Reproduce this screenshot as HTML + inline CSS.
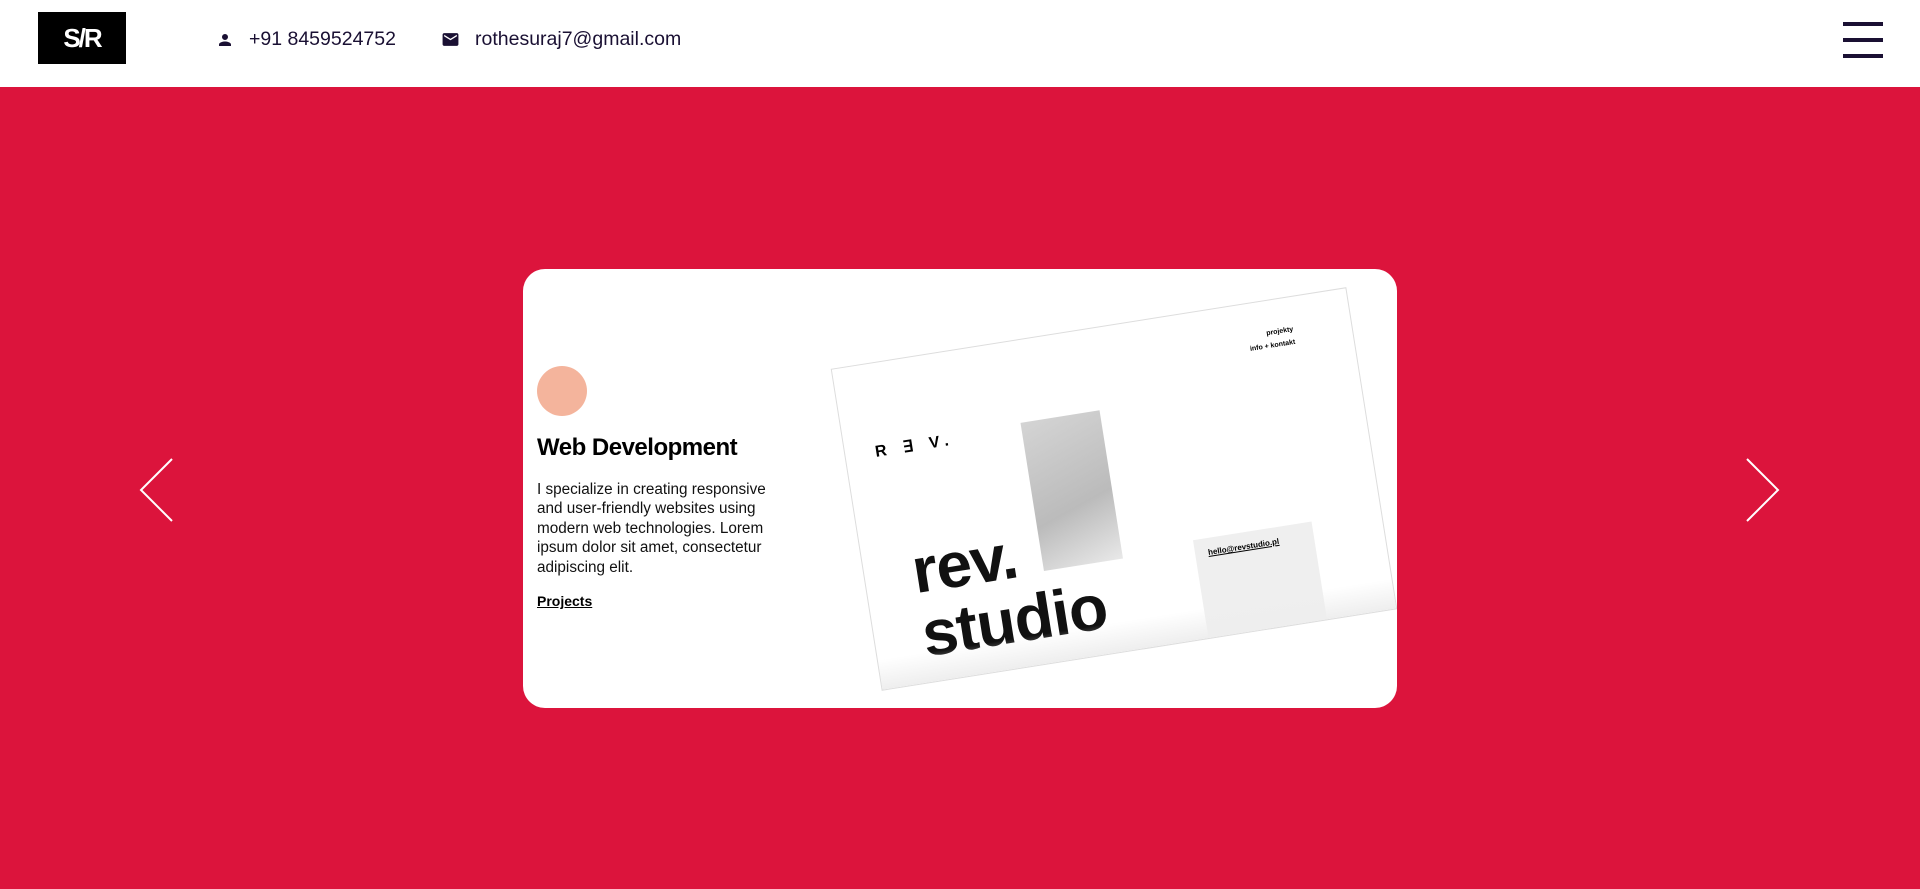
<!DOCTYPE html>
<html><head><meta charset="utf-8"><style>
*{margin:0;padding:0;box-sizing:border-box}
body{width:1920px;height:889px;overflow:hidden;background:#DC143C;font-family:"Liberation Sans",Arial,sans-serif;position:relative}
.hdr{position:absolute;left:0;top:0;width:1920px;height:87px;background:#fff}
.logo{position:absolute;left:38px;top:12px;width:88px;height:52px;background:#000;color:#fff;font-weight:bold;font-size:26px;text-align:center;line-height:52px;letter-spacing:-2px}
.ct{position:absolute;top:27px;font-size:19.5px;color:#1a1033;line-height:24px}
.ham{position:absolute;left:1843px;width:40px;height:3.5px;background:#1a1033}
.card{position:absolute;left:523px;top:269px;width:874px;height:439px;background:#fff;border-radius:22px;overflow:hidden}
.circ{position:absolute;left:14px;top:97px;width:50px;height:50px;border-radius:50%;background:#F4B49C}
h2{position:absolute;left:14px;top:165px;font-size:24px;font-weight:bold;color:#000;letter-spacing:-0.5px}
.p{position:absolute;left:14px;top:211px;width:255px;font-size:15.3px;line-height:19.4px;color:#111}
.pr{position:absolute;left:14px;top:324px;font-size:14px;font-weight:bold;text-decoration:underline;color:#000}
.img{position:absolute;left:330px;top:57px;width:522px;height:326px;background:#fff;border:1.5px solid #ddd;transform:rotate(-9deg);overflow:hidden}
.arr{position:absolute;top:458px}
</style></head><body>
<div class="hdr">
 <div class="logo">S/R</div>
 <svg style="position:absolute;left:216px;top:31px" width="18" height="18" viewBox="0 0 24 24"><path fill="#1a1033" d="M12 12a4 4 0 1 0 0-8 4 4 0 0 0 0 8zm0 2c-2.7 0-8 1.3-8 4v2h16v-2c0-2.7-5.3-4-8-4z"/></svg>
 <div class="ct" style="left:249px">+91 8459524752</div>
 <svg style="position:absolute;left:440px;top:30px" width="21" height="19" viewBox="0 0 24 24"><path fill="#1a1033" d="M20 4H4c-1.1 0-2 .9-2 2v12c0 1.1.9 2 2 2h16c1.1 0 2-.9 2-2V6c0-1.1-.9-2-2-2zm0 4l-8 5-8-5V6l8 5 8-5v2z"/></svg>
 <div class="ct" style="left:475px">rothesuraj7@gmail.com</div>
 <div class="ham" style="top:22px"></div><div class="ham" style="top:38px"></div><div class="ham" style="top:54px"></div>
</div>
<svg class="arr" style="left:138px" width="36" height="64" viewBox="0 0 36 64"><path d="M34 1L3 32l31 31" fill="none" stroke="#fff" stroke-width="2"/></svg>
<svg class="arr" style="left:1745px" width="36" height="64" viewBox="0 0 36 64"><path d="M2 1l31 31L2 63" fill="none" stroke="#fff" stroke-width="2"/></svg>
<div class="card">
 <div class="circ"></div>
 <h2>Web Development</h2>
 <div class="p">I specialize in creating responsive and user-friendly websites using modern web technologies. Lorem ipsum dolor sit amet, consectetur adipiscing elit.</div>
 <div class="pr">Projects</div>
 <div class="img">
  <div style="position:absolute;left:30px;top:78px;font-size:16px;font-weight:bold;letter-spacing:6px">R ∃ V.</div>
  <div style="position:absolute;right:58px;top:26px;font-size:7px;font-weight:bold;text-align:right;line-height:13px">projekty<br>info + kontakt</div>
  <div style="position:absolute;left:178px;top:82px;width:80px;height:150px;background:linear-gradient(160deg,#d4d4d4,#bbb 60%,#e8e8e8)"></div>
  <div style="position:absolute;left:330px;top:225px;width:120px;height:110px;background:#efefef"></div>
  <div style="position:absolute;left:343px;top:235px;font-size:8px;font-weight:bold;text-decoration:underline">hello@revstudio.pl</div>
  <div style="position:absolute;left:48px;top:180px;font-size:64px;font-weight:bold;line-height:64px;letter-spacing:-1px;color:#111">rev.<br>studio</div>
  <div style="position:absolute;left:0;bottom:0;width:100%;height:30px;background:linear-gradient(#fff0,#eee)"></div>
 </div>
</div>
</body></html>
